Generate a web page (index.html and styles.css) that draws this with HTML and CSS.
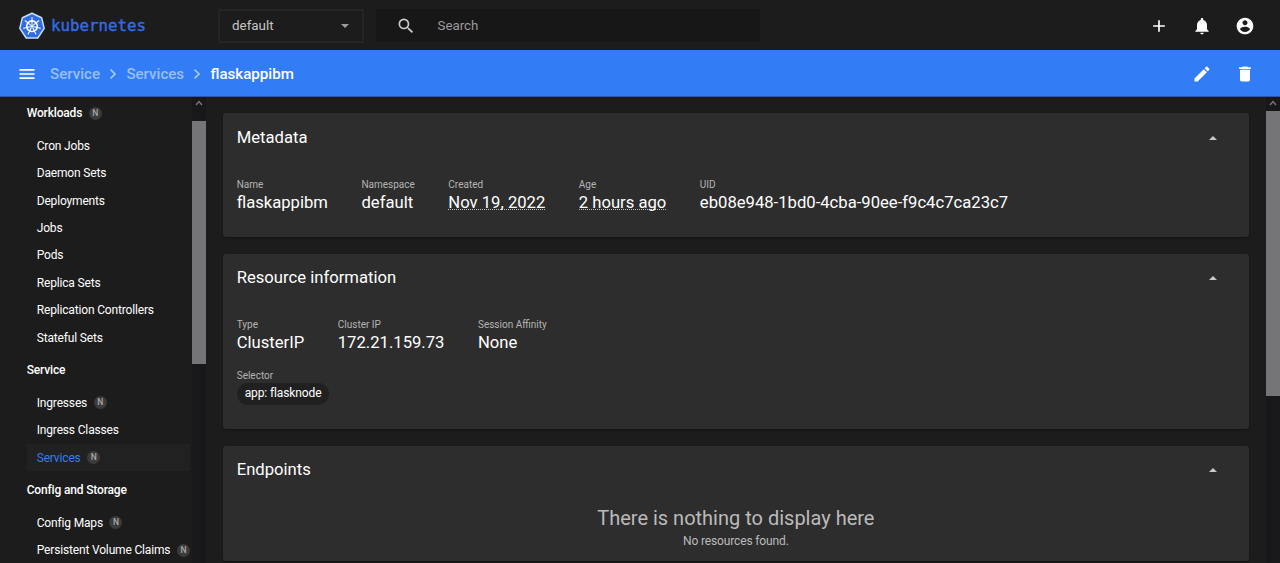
FILE: index.html
```html
<!DOCTYPE html>
<html lang="en">
<head>
<meta charset="utf-8">
<title>Kubernetes Dashboard</title>
<link rel="stylesheet" href="styles.css">
</head>
<body>
<header class="topbar">
  <a class="brand">
    <svg class="brand-mark" viewBox="0 0 28 28">
      <path d="M14 1.3 L23.6 5.8 L26.2 16.4 L19.8 26 L8.2 26 L1.8 16.4 L4.4 5.8 Z" fill="#326ce5" stroke="#c9dcf8" stroke-width="1.5" stroke-linejoin="round"/>
      <g fill="none" stroke="#fff">
        <circle cx="14" cy="14.2" r="5.3" stroke-width="1.6"/>
        <g stroke-width="1.1" stroke-linecap="round">
          <path d="M14 12.2V5.6M15.6 12.9L20.8 8.8M15.9 14.7L22.4 16.2M14.9 16L17.8 22M13.1 16L10.2 22M12.1 14.7L5.6 16.2M12.4 12.9L7.2 8.8"/>
        </g>
      </g>
      <circle cx="14" cy="14.2" r="1.5" fill="#fff"/>
    </svg>
    <span class="brand-name">kubernetes</span>
  </a>
  <div class="namespace"><span>default</span><i class="caret-down"></i></div>
  <div class="search">
    <svg class="icon" viewBox="0 0 24 24"><path d="M15.5 14h-.79l-.28-.27A6.47 6.47 0 0 0 16 9.5 6.5 6.5 0 1 0 9.5 16c1.61 0 3.09-.59 4.23-1.57l.27.28v.79l5 4.99L20.49 19l-4.99-5zm-6 0C7.01 14 5 11.99 5 9.5S7.01 5 9.5 5 14 7.01 14 9.5 11.99 14 9.5 14z"/></svg>
    <span>Search</span>
  </div>
  <div class="actions">
    <svg class="icon" viewBox="0 0 24 24"><path d="M19 13h-6v6h-2v-6H5v-2h6V5h2v6h6v2z"/></svg>
    <svg class="icon" viewBox="0 0 24 24"><path d="M12 22c1.1 0 2-.9 2-2h-4c0 1.1.89 2 2 2zm6-6v-5c0-3.07-1.64-5.64-4.5-6.32V4c0-.83-.67-1.5-1.5-1.5s-1.5.67-1.5 1.5v.68C7.63 5.36 6 7.92 6 11v5l-2 2v1h16v-1l-2-2z"/></svg>
    <svg class="icon" viewBox="0 0 24 24"><path d="M12 2C6.48 2 2 6.48 2 12s4.48 10 10 10 10-4.48 10-10S17.52 2 12 2zm0 3c1.66 0 3 1.34 3 3s-1.34 3-3 3-3-1.34-3-3 1.34-3 3-3zm0 14.2c-2.5 0-4.71-1.28-6-3.22.03-1.99 4-3.08 6-3.08 1.99 0 5.97 1.09 6 3.08-1.29 1.94-3.5 3.22-6 3.22z"/></svg>
  </div>
</header>

<div class="crumbbar">
  <svg class="icon" viewBox="0 0 24 24"><path d="M3 18h18v-2H3v2zm0-5h18v-2H3v2zm0-7v2h18V6H3z"/></svg>
  <nav class="crumbs">
    <span>Service</span>
    <svg class="chevron" viewBox="0 0 8 12"><path d="M1.5 1.5L6 6L1.5 10.5"/></svg>
    <span>Services</span>
    <svg class="chevron" viewBox="0 0 8 12"><path d="M1.5 1.5L6 6L1.5 10.5"/></svg>
    <span class="current">flaskappibm</span>
  </nav>
  <div class="actions">
    <svg class="icon" viewBox="0 0 24 24"><path d="M3 17.25V21h3.75L17.81 9.94l-3.75-3.75L3 17.25zM20.71 7.04c.39-.39.39-1.02 0-1.41l-2.34-2.34c-.39-.39-1.02-.39-1.41 0l-1.83 1.83 3.75 3.75 1.83-1.83z"/></svg>
    <svg class="icon" viewBox="0 0 24 24"><path d="M6 19c0 1.1.9 2 2 2h8c1.1 0 2-.9 2-2V7H6v12zM19 4h-3.5l-1-1h-5l-1 1H5v2h14V4z"/></svg>
  </div>
</div>

<div class="shell">
  <aside class="sidebar">
    <nav class="menu">
      <div class="group">Workloads<b class="badge">N</b></div>
      <div class="item">Cron Jobs</div>
      <div class="item">Daemon Sets</div>
      <div class="item">Deployments</div>
      <div class="item">Jobs</div>
      <div class="item">Pods</div>
      <div class="item">Replica Sets</div>
      <div class="item">Replication Controllers</div>
      <div class="item">Stateful Sets</div>
      <div class="group">Service</div>
      <div class="item">Ingresses<b class="badge">N</b></div>
      <div class="item">Ingress Classes</div>
      <div class="item active">Services<b class="badge">N</b></div>
      <div class="group">Config and Storage</div>
      <div class="item">Config Maps<b class="badge">N</b></div>
      <div class="item">Persistent Volume Claims<b class="badge">N</b></div>
    </nav>
    <div class="scrollbar side">
      <svg class="arrow" viewBox="0 0 8 6"><path d="M1 5L4 1.5L7 5"/></svg>
      <div class="thumb"></div>
    </div>
  </aside>

  <main class="content">
    <section class="card metadata">
      <h2>Metadata<i class="caret-up"></i></h2>
      <div class="props">
        <div class="prop"><span class="key">Name</span><span class="value">flaskappibm</span></div>
        <div class="prop"><span class="key">Namespace</span><span class="value">default</span></div>
        <div class="prop"><span class="key">Created</span><span class="value date">Nov 19, 2022</span></div>
        <div class="prop"><span class="key">Age</span><span class="value date">2 hours ago</span></div>
        <div class="prop"><span class="key">UID</span><span class="value">eb08e948-1bd0-4cba-90ee-f9c4c7ca23c7</span></div>
      </div>
    </section>
    <section class="card resource">
      <h2>Resource information<i class="caret-up"></i></h2>
      <div class="props">
        <div class="prop"><span class="key">Type</span><span class="value">ClusterIP</span></div>
        <div class="prop"><span class="key">Cluster IP</span><span class="value">172.21.159.73</span></div>
        <div class="prop"><span class="key">Session Affinity</span><span class="value">None</span></div>
      </div>
      <div class="props">
        <div class="prop"><span class="key">Selector</span><span class="chip">app: flasknode</span></div>
      </div>
    </section>
    <section class="card endpoints">
      <h2>Endpoints<i class="caret-up"></i></h2>
      <div class="empty">
        <p class="empty-title">There is nothing to display here</p>
        <p class="empty-note">No resources found.</p>
      </div>
    </section>
  </main>
  <div class="scrollbar main">
    <svg class="arrow" viewBox="0 0 8 6"><path d="M1 5L4 1.5L7 5"/></svg>
    <div class="thumb"></div>
  </div>
</div>
</body>
</html>
```
FILE: styles.css
```css
* { box-sizing: border-box; }
body {
  margin: 0;
  height: 563px;
  display: flex;
  flex-direction: column;
  overflow: hidden;
  background: #1c1c1c;
  color: #fff;
  font-family: Roboto, "Liberation Sans", sans-serif;
  font-size: 12px;
}
.icon { width: 20px; height: 20px; fill: #fff; flex: none; }

.topbar {
  height: 50px;
  flex: none;
  display: flex;
  align-items: center;
  padding: 1px 25px 0 18px;
}
.brand { display: flex; align-items: center; width: 200px; gap: 5px; }
.brand-mark { width: 28px; height: 28px; }
.brand-name {
  font-family: "DejaVu Sans Mono", monospace;
  font-size: 15.8px;
  color: #326ce5;
  -webkit-text-stroke: 0.4px #326ce5;
}
.namespace {
  width: 146px;
  height: 34px;
  border: 2px solid #242424;
  display: flex;
  align-items: center;
  justify-content: space-between;
  padding: 0 13px 0 12px;
  font-size: 13.4px;
  color: #c6c6c6;
}
.caret-down {
  border: 4px solid transparent;
  border-top-color: #9e9e9e;
  border-bottom: 0;
}
.search {
  width: 384px;
  height: 33px;
  margin-left: 12px;
  padding-left: 20px;
  display: flex;
  align-items: center;
  gap: 21.5px;
  background: #171717;
  color: #9b9b9b;
  font-size: 13.3px;
}
.search .icon { fill: #cacaca; }
.actions { margin-left: auto; display: flex; gap: 23px; }

.crumbbar {
  height: 47px;
  flex: none;
  display: flex;
  align-items: center;
  padding: 2px 25px 0 17px;
  background: #327df5;
  border-bottom: 1px solid #2859a8;
}
.crumbs {
  display: flex;
  align-items: center;
  margin-left: 13px;
  font-size: 15.1px;
  font-weight: 500;
  color: #98bffa;
}
.chevron { width: 8px; height: 12px; margin: 0 9.2px; fill: none; stroke: #a9cafb; stroke-width: 1.7; }
.current { color: #fff; }

.shell { flex: 1; min-height: 0; display: flex; }
.sidebar { width: 206px; flex: none; display: flex; overflow: hidden; }
.menu { flex: 1; min-width: 0; margin-top: -2.6px; padding-right: 2px; letter-spacing: -0.16px; }
.group, .item { display: flex; align-items: center; white-space: nowrap; }
.group { height: 37.6px; padding-left: 26.7px; font-weight: 500; }
.item { height: 27.45px; margin-left: 26.7px; padding-left: 10px; }
.active { color: #327df5; background: #212121; }
.badge {
  width: 13px;
  height: 13px;
  flex: none;
  margin-left: 6.5px;
  border-radius: 50%;
  background: #3b3b3b;
  color: #a8a8a8;
  font-size: 8.5px;
  font-weight: 500;
  line-height: 13px;
  letter-spacing: 0;
  text-align: center;
}

.scrollbar { width: 14px; flex: none; background: #18181a; display: flex; flex-direction: column; align-items: center; }
.arrow { width: 8px; height: 6px; margin: 3px 0 4px; flex: none; fill: none; stroke: #77777a; stroke-width: 1.4; }
.thumb { width: 14px; background: #757577; }
.side .thumb { height: 243px; margin-top: 11px; }
.main .thumb { height: 285px; margin-top: 1px; }

.content {
  flex: 1;
  min-width: 0;
  display: flex;
  flex-direction: column;
  gap: 17px;
  padding: 16px 17px 0;
}
.card {
  flex: none;
  border-radius: 3px;
  padding: 0 32px 0 13.7px;
  background: #2d2d2d;
  box-shadow: 0 1px 2px rgba(0, 0, 0, .35);
}
.metadata { height: 124px; }
.resource { height: 175px; }
.endpoints { height: 115px; }
.card h2 {
  height: 46px;
  margin: 0;
  display: flex;
  align-items: center;
  justify-content: space-between;
  font-size: 16.65px;
  font-weight: 400;
}
.metadata h2 { height: 48px; }
.caret-up {
  margin-top: 2px;
  border: 4.5px solid transparent;
  border-bottom-color: #c8c8c8;
  border-top: 0;
}
.props { display: flex; gap: 33.5px; padding-top: 18px; }
.metadata .props { padding-top: 17px; }
.props + .props { padding-top: 15px; }
.prop { display: flex; flex-direction: column; align-items: flex-start; white-space: nowrap; }
.key { font-size: 10px; line-height: 13px; color: #b4b4b4; }
.value { font-size: 16.65px; line-height: 23px; }
.date { height: 19px; border-bottom: 1px dotted #bbb; }
.chip {
  height: 22px;
  padding: 0 8px;
  margin-top: 1px;
  border-radius: 11px;
  background: #202020;
  line-height: 21px;
  letter-spacing: -0.12px;
}
.empty { padding-left: 18px; text-align: center; color: #bbb; }
.empty p { margin: 0; }
.empty-title { padding-top: 14px; font-size: 20px; line-height: 24px; }
.empty-note { line-height: 22px; letter-spacing: -0.14px; }
```
